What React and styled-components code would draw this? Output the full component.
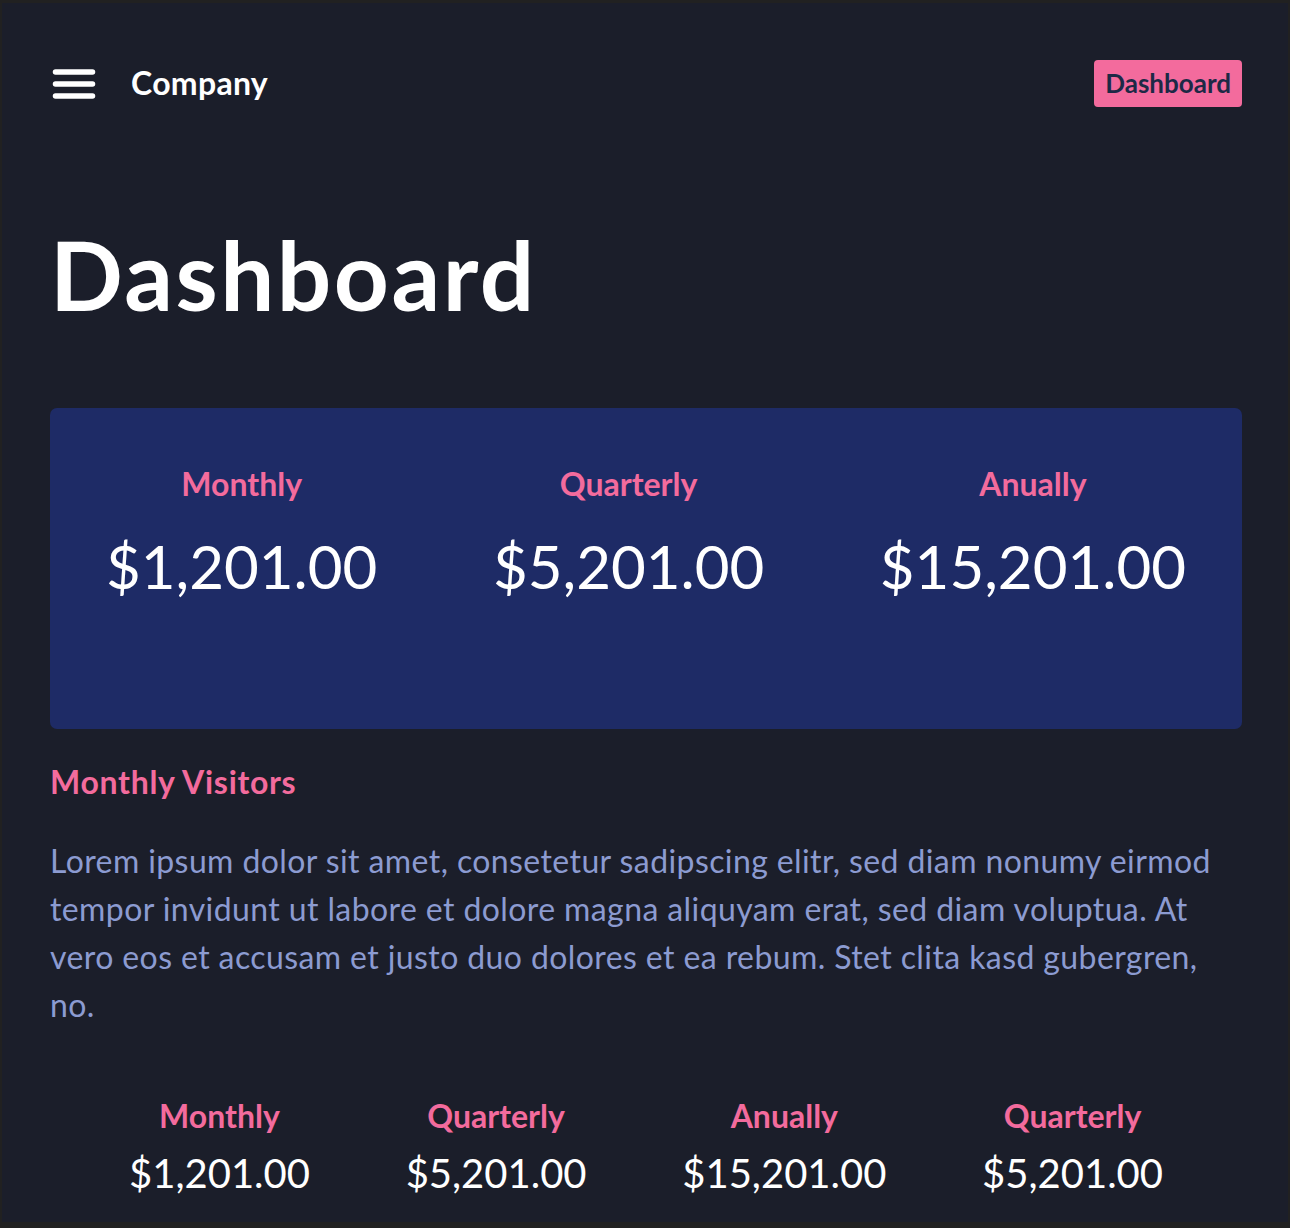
import React from 'react';
import styled, { createGlobalStyle } from 'styled-components';

const GlobalStyle = createGlobalStyle`
  html, body {
    margin: 0;
    padding: 0;
    background: #212121;
  }
  * {
    box-sizing: border-box;
  }
`;

const summary = [
  { label: 'Monthly', value: '$1,201.00' },
  { label: 'Quarterly', value: '$5,201.00' },
  { label: 'Anually', value: '$15,201.00' }
];

const stats = [
  { label: 'Monthly', value: '$1,201.00' },
  { label: 'Quarterly', value: '$5,201.00' },
  { label: 'Anually', value: '$15,201.00' },
  { label: 'Quarterly', value: '$5,201.00' }
];

const MenuIcon = () => (
  <svg width="48" height="48" viewBox="0 0 48 48" fill="none">
    <g stroke="#ffffff" strokeWidth="5.5" strokeLinecap="round">
      <line x1="5.5" y1="12" x2="42.5" y2="12" />
      <line x1="5.5" y1="24" x2="42.5" y2="24" />
      <line x1="5.5" y1="36" x2="42.5" y2="36" />
    </g>
  </svg>
);

const App = () => {
  return (
    <>
      <GlobalStyle />
      <Frame>
        <Header>
          <Brand>
            <MenuButton>
              <MenuIcon />
            </MenuButton>
            <BrandName>Company</BrandName>
          </Brand>
          <NavPill>Dashboard</NavPill>
        </Header>

        <PageTitle>Dashboard</PageTitle>

        <SummaryCard>
          {summary.map((item) => (
            <Stat key={item.label}>
              <StatLabel>{item.label}</StatLabel>
              <StatValue big>{item.value}</StatValue>
            </Stat>
          ))}
        </SummaryCard>

        <SectionTitle>Monthly Visitors</SectionTitle>
        <Paragraph>
          Lorem ipsum dolor sit amet, consetetur sadipscing elitr, sed diam nonumy eirmod
          tempor invidunt ut labore et dolore magna aliquyam erat, sed diam voluptua. At
          vero eos et accusam et justo duo dolores et ea rebum. Stet clita kasd gubergren,
          no.
        </Paragraph>

        <StatsRow>
          {stats.map((item, i) => (
            <Stat key={i}>
              <StatLabel>{item.label}</StatLabel>
              <StatValue>{item.value}</StatValue>
            </Stat>
          ))}
        </StatsRow>
      </Frame>
    </>
  );
};

// Styled Components
const Frame = styled.div`
  margin: 3px 2px 0 2px;
  background: #1b1e2a;
  padding: 57px 46px 25px 48px;
  font-family: 'Lato', 'Liberation Sans', sans-serif;
  color: #ffffff;
`;

const Header = styled.header`
  display: flex;
  align-items: center;
  justify-content: space-between;
  height: 47px;
`;

const Brand = styled.div`
  display: flex;
  align-items: center;
  gap: 33px;
`;

const MenuButton = styled.div`
  display: flex;
  width: 48px;
  height: 48px;
`;

const BrandName = styled.span`
  font-size: 32px;
  font-weight: 700;
  line-height: 1.2;
  letter-spacing: 0.3px;
`;

const NavPill = styled.div`
  background: #f36b9d;
  color: #1d2946;
  font-size: 26px;
  font-weight: 700;
  line-height: 1.2;
  padding: 8px 11px;
  border-radius: 4px;
`;

const PageTitle = styled.h1`
  margin: 109px 0 77px;
  font-size: 96px;
  font-weight: 700;
  line-height: 1.2;
  letter-spacing: 2.5px;
`;

const SummaryCard = styled.section`
  display: flex;
  justify-content: space-between;
  background: #1e2b66;
  border-radius: 7px;
  padding: 57px 56px 0;
  height: 321px;
`;

const Stat = styled.div`
  display: flex;
  flex-direction: column;
  align-items: center;
`;

const StatLabel = styled.div`
  color: #f36b9d;
  font-size: 32px;
  font-weight: 700;
  line-height: 1.2;
`;

const StatValue = styled.div`
  color: #ffffff;
  font-size: ${(p) => (p.big ? '60px' : '40px')};
  font-weight: 400;
  line-height: 1.2;
  margin-top: ${(p) => (p.big ? '26px' : '14px')};
`;

const SectionTitle = styled.h2`
  margin: 34px 0 0;
  color: #f36b9d;
  font-size: 32px;
  font-weight: 700;
  line-height: 1.2;
  letter-spacing: 0.7px;
`;

const Paragraph = styled.p`
  margin: 35px 0 0;
  color: #8c9bd1;
  font-size: 32px;
  line-height: 48px;
  letter-spacing: 0.4px;
`;

const StatsRow = styled.section`
  display: flex;
  justify-content: space-between;
  padding: 0 79px;
  margin-top: 68px;
`;

export default App;
